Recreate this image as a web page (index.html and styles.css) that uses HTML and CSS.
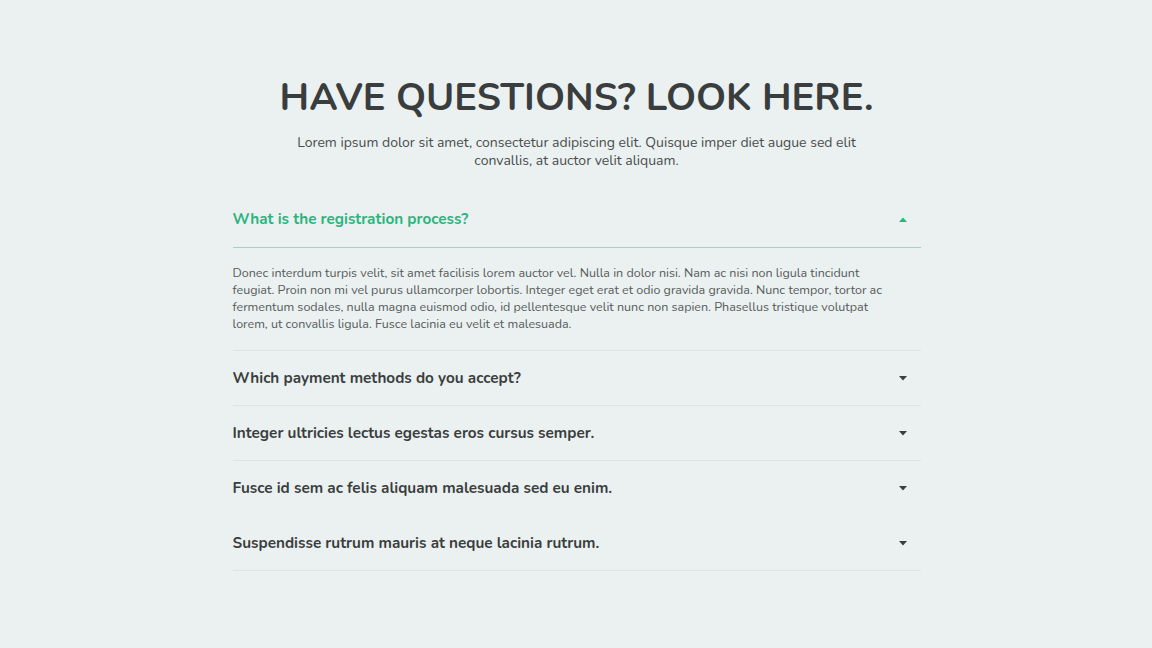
FILE: index.html
```html
<!DOCTYPE html>
<html lang="en">
<head>
<meta charset="utf-8">
<title>FAQ</title>
<link rel="stylesheet" href="styles.css">
</head>
<body>
<main class="faq">
  <header class="faq-head">
    <h1 class="faq-title">HAVE QUESTIONS? LOOK HERE.</h1>
    <p class="faq-lead">Lorem ipsum dolor sit amet, consectetur adipiscing elit. Quisque imper diet augue sed elit convallis, at auctor velit aliquam.</p>
  </header>

  <section class="faq-list">
    <div class="faq-item is-open">
      <div class="faq-q">
        <span>What is the registration process?</span>
        <svg class="caret" width="8" height="5" viewBox="0 0 8 5"><path d="M0 5 L4 0.5 L8 5 Z"/></svg>
      </div>
      <div class="faq-a">Donec interdum turpis velit, sit amet facilisis lorem auctor vel. Nulla in dolor nisi. Nam ac nisi non ligula tincidunt feugiat. Proin non mi vel purus ullamcorper lobortis. Integer eget erat et odio gravida gravida. Nunc tempor, tortor ac fermentum sodales, nulla magna euismod odio, id pellentesque velit nunc non sapien. Phasellus tristique volutpat lorem, ut convallis ligula. Fusce lacinia eu velit et malesuada.</div>
    </div>
    <div class="faq-item">
      <div class="faq-q">
        <span>Which payment methods do you accept?</span>
        <svg class="caret" width="8" height="5" viewBox="0 0 8 5"><path d="M0 0 L8 0 L4 4.5 Z"/></svg>
      </div>
    </div>
    <div class="faq-item">
      <div class="faq-q">
        <span>Integer ultricies lectus egestas eros cursus semper.</span>
        <svg class="caret" width="8" height="5" viewBox="0 0 8 5"><path d="M0 0 L8 0 L4 4.5 Z"/></svg>
      </div>
    </div>
    <div class="faq-item is-faint">
      <div class="faq-q">
        <span>Fusce id sem ac felis aliquam malesuada sed eu enim.</span>
        <svg class="caret" width="8" height="5" viewBox="0 0 8 5"><path d="M0 0 L8 0 L4 4.5 Z"/></svg>
      </div>
    </div>
    <div class="faq-item">
      <div class="faq-q">
        <span>Suspendisse rutrum mauris at neque lacinia rutrum.</span>
        <svg class="caret" width="8" height="5" viewBox="0 0 8 5"><path d="M0 0 L8 0 L4 4.5 Z"/></svg>
      </div>
    </div>
  </section>
</main>
</body>
</html>
```

FILE: styles.css
```css
html, body {
  margin: 0;
  padding: 0;
}

body {
  background: #eaf1f0;
  font-family: "Nunito", "Lato", "Noto Sans", sans-serif;
  color: #3b3e3e;
}

.faq {
  width: 688px;
  margin: 0 auto;
  padding: 74px 0 0 1px;
}

.faq-head {
  text-align: center;
}

.faq-title {
  margin: 0;
  font-size: 38.3px;
  line-height: 48px;
  font-weight: 700;
  color: #3a3d3d;
}

.faq-lead {
  width: 570px;
  margin: 12px auto 0;
  font-size: 14px;
  line-height: 18px;
  color: #4a4d4d;
}

.faq-list {
  margin-top: 21px;
}

.faq-item {
  border-bottom: 1px solid #dde6e5;
}

.faq-item.is-faint {
  border-bottom-color: transparent;
}

.faq-q {
  display: flex;
  align-items: center;
  justify-content: space-between;
  height: 54px;
  padding-right: 14px;
  font-size: 15.3px;
  font-weight: 700;
  color: #3b3e3e;
}

.caret {
  fill: #3b3e3e;
}

.is-open .faq-q {
  height: 56px;
  color: #2db37e;
  border-bottom: 1px solid #9ed5c0;
}

.is-open .caret {
  fill: #2db37e;
}

.faq-a {
  padding: 16px 24px 18px 0;
  font-size: 12.5px;
  line-height: 17px;
  color: #575b5b;
}
```
